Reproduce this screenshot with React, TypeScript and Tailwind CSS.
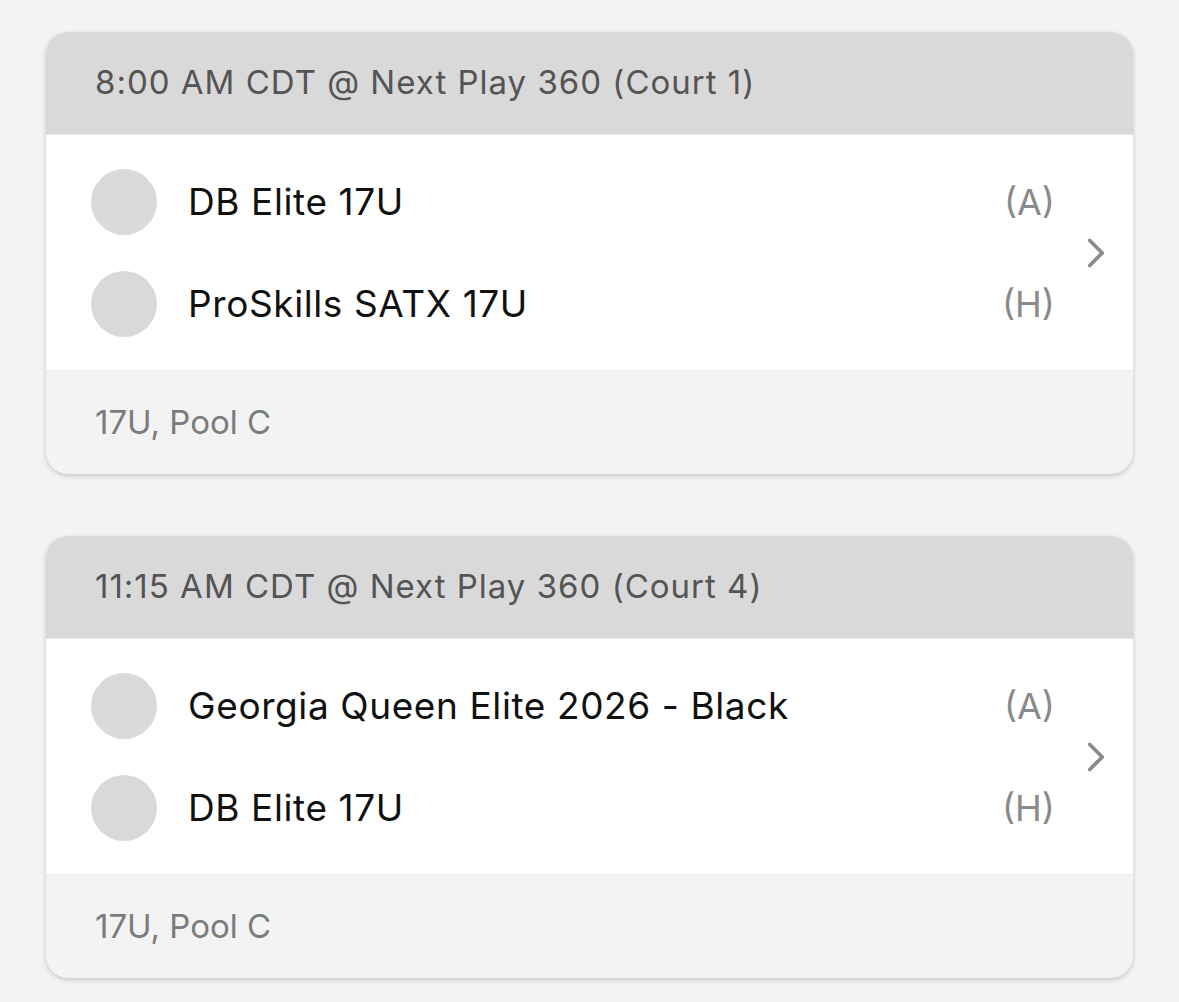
import { ChevronRight } from 'lucide-react';

type Team = { name: string; side: string };
type Game = { time: string; teams: Team[]; pool: string };

const games: Game[] = [
  {
    time: '8:00 AM CDT @ Next Play 360 (Court 1)',
    teams: [
      { name: 'DB Elite 17U', side: '(A)' },
      { name: 'ProSkills SATX 17U', side: '(H)' },
    ],
    pool: '17U, Pool C',
  },
  {
    time: '11:15 AM CDT @ Next Play 360 (Court 4)',
    teams: [
      { name: 'Georgia Queen Elite 2026 - Black', side: '(A)' },
      { name: 'DB Elite 17U', side: '(H)' },
    ],
    pool: '17U, Pool C',
  },
];

function GameCard({ game }: { game: Game }) {
  return (
    <section className="rounded-[22px] overflow-hidden bg-[#f2f3f5] shadow-[0_2px_5px_rgba(0,0,0,0.18)]">
      {/* Header */}
      <div className="h-[103px] bg-[#d9d9d9] flex items-center px-[49px] border-b border-[#e6e6e6]">
        <span className="text-[33px] text-[#545454] tracking-[1px]">{game.time}</span>
      </div>

      {/* Teams */}
      <div className="bg-white h-[235px] flex items-center pl-[45px] pr-[12px]">
        <div className="flex-1 flex flex-col gap-[36px]">
          {game.teams.map((t) => (
            <div key={t.name + t.side} className="flex items-center">
              <div className="w-[66px] h-[66px] rounded-full bg-[#d9d9d9] shrink-0" />
              <span className="ml-[31px] text-[37px] text-[#111111] tracking-[0.6px]">{t.name}</span>
              <span className="ml-auto text-[36px] text-[#8a8a8a]">{t.side}</span>
            </div>
          ))}
        </div>
        <ChevronRight className="ml-[16px] w-[50px] h-[50px] text-[#8a8a8a] shrink-0" strokeWidth={1.8} />
      </div>

      {/* Footer */}
      <div className="h-[104px] flex items-center px-[49px] border-t border-[#ececec]">
        <span className="text-[33px] text-[#7b7b7b]">{game.pool}</span>
      </div>
    </section>
  );
}

export default function App() {
  return (
    <div
      className="min-h-screen bg-[#f2f3f5] px-[46px] pt-[32px] pb-[22px] flex flex-col gap-[62px]"
      style={{ fontFamily: 'Inter, "Noto Sans", sans-serif' }}
    >
      {games.map((g) => (
        <GameCard key={g.time} game={g} />
      ))}
    </div>
  );
}
